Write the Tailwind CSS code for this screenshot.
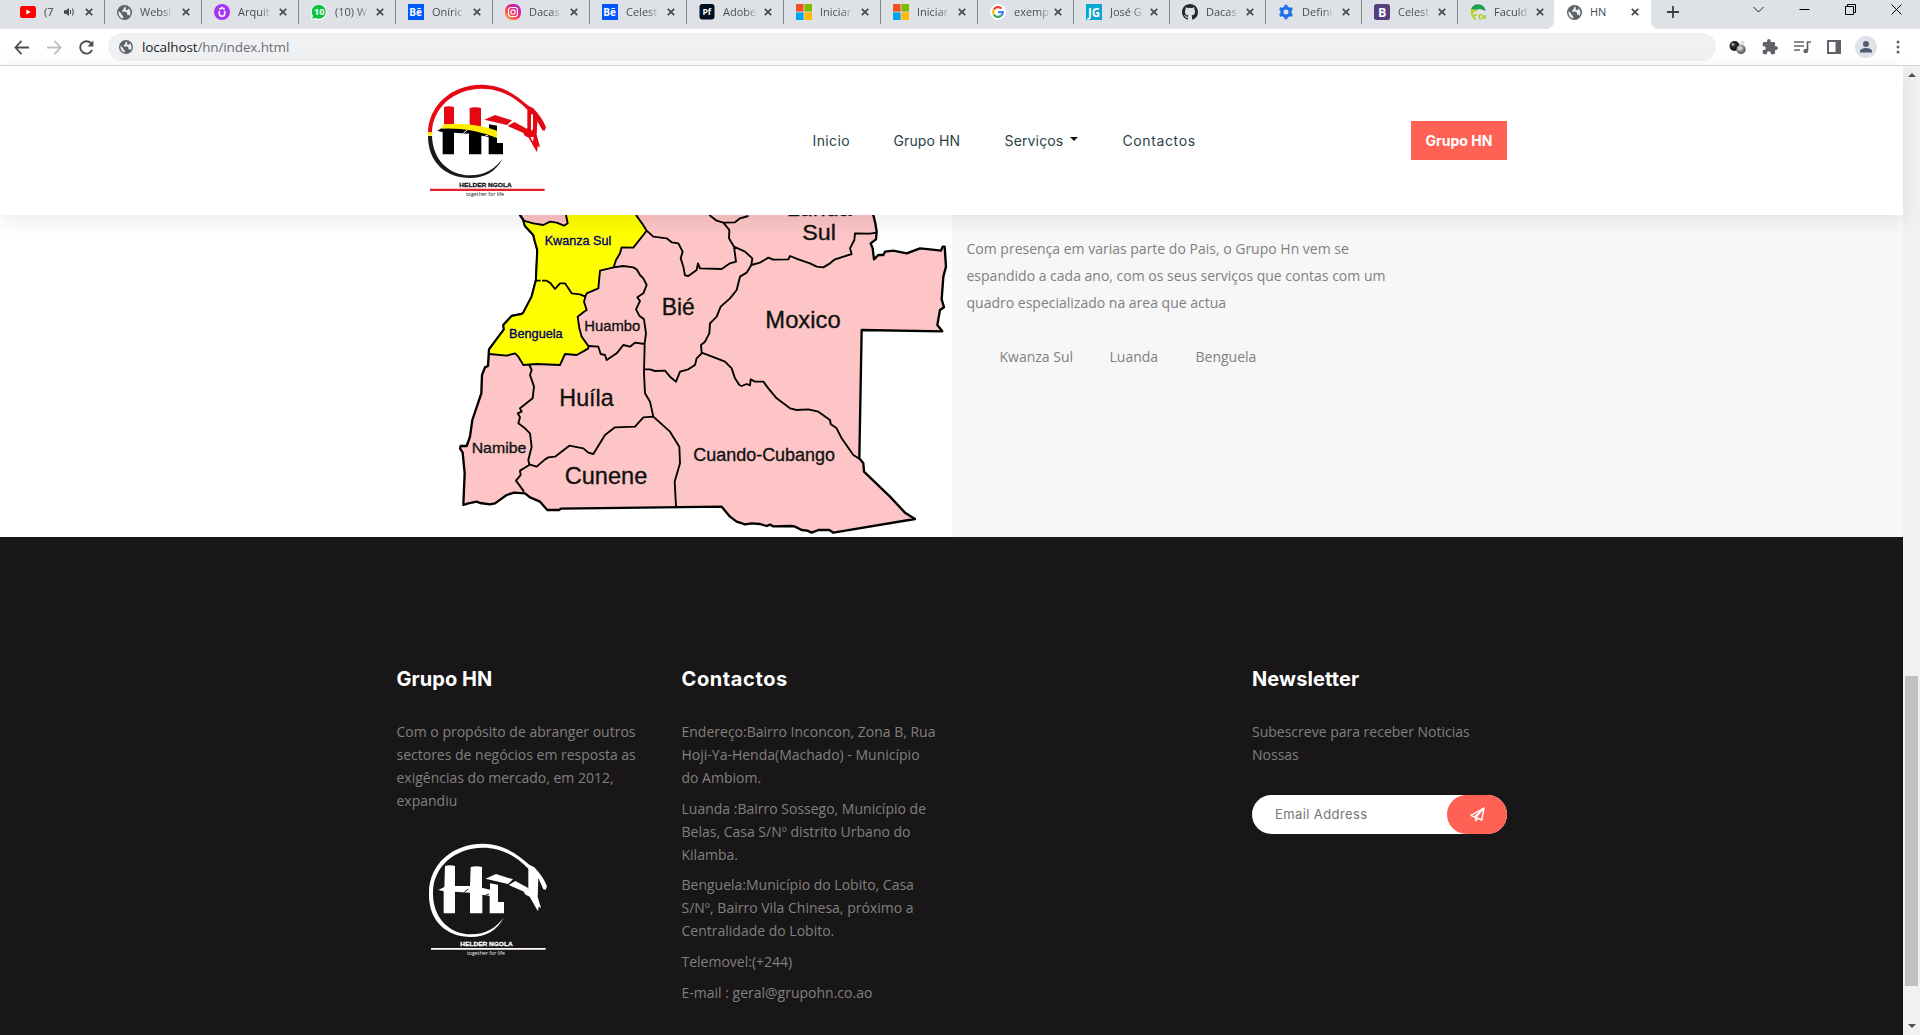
<!DOCTYPE html>
<html lang="pt">
<head>
<meta charset="utf-8">
<title>HN</title>
<script src="https://cdn.jsdelivr.net/npm/@tailwindcss/browser@4"></script>
</head>
<body class="h-[1035px] w-[1920px] overflow-hidden bg-white flex flex-col font-['Open_Sans',sans-serif]">
<svg class="hidden">
  <symbol id="globe" viewBox="0 0 14 14"><circle cx="7" cy="7" r="7" fill="#5f6368"/><path d="M1.500 5.500 4.200 8.200v1l1.600 1.200v2C3 12 1 9.500 1.500 5.500zM8 1.500 6.200 2.800V4L4.800 5.200v1.200h3.600l1 1.200v1.600h1.500l.9 1C13 8 12.800 5 11 3.200L9.800 4.800 8.300 4.400z" fill="#eceef0"/></symbol>
  <symbol id="x" viewBox="0 0 8 8"><path d="M.8.8l6.400 6.400M7.200.8.8 7.200" stroke="#45484c" stroke-width="1.700"/></symbol>
  <symbol id="be" viewBox="0 0 16 16"><path fill="#0057ff" d="M0 0h16v16H0z"/><text x="1.300" y="12" font-family="Open Sans" font-weight="700" font-size="10" fill="#fff">Bē</text></symbol>
  <symbol id="ms" viewBox="0 0 16 16"><path fill="#f25022" d="M0 0h7.600v7.600H0z"/><path fill="#7fba00" d="M8.400 0H16v7.600H8.400z"/><path fill="#00a4ef" d="M0 8.400h7.600V16H0z"/><path fill="#ffb900" d="M8.400 8.400H16V16H8.400z"/></symbol>
</svg>

<!-- tab strip -->
<div class="h-[29px] shrink-0 bg-[#dee1e6] flex pl-2 text-[11px] text-[#45484c]">
  <div class="w-[97px] h-6 flex items-center border-r border-[#85888c] pl-3 pr-[11px]">
    <svg class="w-4 h-4 shrink-0" viewBox="0 0 16 16"><rect y="2" width="16" height="12" rx="2.500" fill="#f00"/><path d="m6.300 5.500 4.400 2.500-4.400 2.500z" fill="#fff"/></svg>
    <span class="ml-2 w-[12px]">(7</span>
    <svg class="ml-2 w-[10px] h-[10px] shrink-0" viewBox="0 0 10 10"><path d="M0 3.300h2L5 1v8L2 6.700H0z" fill="#45484c"/><path d="M6.500 3v4M8.600 1.500q1.200 3.500 0 7" stroke="#45484c" fill="none"/></svg>
    <svg class="ml-auto w-2 h-2 shrink-0"><use href="#x"/></svg>
  </div>
  <div class="w-[97px] h-6 flex items-center border-r border-[#85888c] pl-3 pr-[11px]"><svg class="w-[15px] h-[15px] shrink-0"><use href="#globe"/></svg><span class="ml-2 whitespace-nowrap bg-linear-to-r from-[#45484c] from-70% to-[#c4c7cc] bg-clip-text text-transparent">Websi</span><svg class="ml-auto w-2 h-2 shrink-0"><use href="#x"/></svg></div>
  <div class="w-[97px] h-6 flex items-center border-r border-[#85888c] pl-3 pr-[11px]"><svg class="w-4 h-4 shrink-0" viewBox="0 0 16 16"><circle cx="8" cy="8" r="8" fill="#a435f0"/><path d="M5.300 7v2.500a2.700 2.700 0 0 0 5.400 0V7M5.300 5.500 8 3.700l2.700 1.800" stroke="#fff" stroke-width="1.600" fill="none"/></svg><span class="ml-2 whitespace-nowrap bg-linear-to-r from-[#45484c] from-70% to-[#c4c7cc] bg-clip-text text-transparent">Arquit</span><svg class="ml-auto w-2 h-2 shrink-0"><use href="#x"/></svg></div>
  <div class="w-[97px] h-6 flex items-center border-r border-[#85888c] pl-3 pr-[11px]"><svg class="w-4 h-4 shrink-0" viewBox="0 0 16 16"><path d="M0 16 .8 12A8 8 0 1 1 4 15.200z" fill="#fff"/><path d="M1.300 14.700 2 11.800A7 7 0 1 1 4.500 14z" fill="#0cc143"/><text x="3" y="11.300" font-family="Open Sans" font-weight="700" font-size="9" fill="#fff">10</text></svg><span class="ml-2 whitespace-nowrap bg-linear-to-r from-[#45484c] from-70% to-[#c4c7cc] bg-clip-text text-transparent">(10) W</span><svg class="ml-auto w-2 h-2 shrink-0"><use href="#x"/></svg></div>
  <div class="w-[97px] h-6 flex items-center border-r border-[#85888c] pl-3 pr-[11px]"><svg class="w-4 h-4 shrink-0"><use href="#be"/></svg><span class="ml-2 whitespace-nowrap bg-linear-to-r from-[#45484c] from-70% to-[#c4c7cc] bg-clip-text text-transparent">Oníric</span><svg class="ml-auto w-2 h-2 shrink-0"><use href="#x"/></svg></div>
  <div class="w-[97px] h-6 flex items-center border-r border-[#85888c] pl-3 pr-[11px]"><svg class="w-4 h-4 shrink-0" viewBox="0 0 16 16"><defs><linearGradient id="ig" x1="0" y1="1" x2=".8" y2="0"><stop offset="0" stop-color="#ffc83a"/><stop offset=".5" stop-color="#ff2a5a"/><stop offset="1" stop-color="#b01be0"/></linearGradient></defs><rect width="16" height="16" rx="7" fill="url(#ig)"/><rect x="3.500" y="3.500" width="9" height="9" rx="2.500" stroke="#fff" stroke-width="1.200" fill="none"/><circle cx="8" cy="8" r="2.200" stroke="#fff" stroke-width="1.200" fill="none"/></svg><span class="ml-2 whitespace-nowrap bg-linear-to-r from-[#45484c] from-70% to-[#c4c7cc] bg-clip-text text-transparent">Dacas</span><svg class="ml-auto w-2 h-2 shrink-0"><use href="#x"/></svg></div>
  <div class="w-[97px] h-6 flex items-center border-r border-[#85888c] pl-3 pr-[11px]"><svg class="w-4 h-4 shrink-0"><use href="#be"/></svg><span class="ml-2 whitespace-nowrap bg-linear-to-r from-[#45484c] from-70% to-[#c4c7cc] bg-clip-text text-transparent">Celest</span><svg class="ml-auto w-2 h-2 shrink-0"><use href="#x"/></svg></div>
  <div class="w-[97px] h-6 flex items-center border-r border-[#85888c] pl-3 pr-[11px]"><svg class="w-4 h-4 shrink-0" viewBox="0 0 16 16"><rect x=".5" width="15" height="15.500" rx="3" fill="#001021"/><text x="3.400" y="11" font-family="Open Sans" font-weight="700" font-size="8.500" fill="#fff">Pf</text></svg><span class="ml-2 whitespace-nowrap bg-linear-to-r from-[#45484c] from-70% to-[#c4c7cc] bg-clip-text text-transparent">Adobe</span><svg class="ml-auto w-2 h-2 shrink-0"><use href="#x"/></svg></div>
  <div class="w-[97px] h-6 flex items-center border-r border-[#85888c] pl-3 pr-[11px]"><svg class="w-4 h-4 shrink-0"><use href="#ms"/></svg><span class="ml-2 whitespace-nowrap bg-linear-to-r from-[#45484c] from-70% to-[#c4c7cc] bg-clip-text text-transparent">Iniciar</span><svg class="ml-auto w-2 h-2 shrink-0"><use href="#x"/></svg></div>
  <div class="w-[97px] h-6 flex items-center border-r border-[#85888c] pl-3 pr-[11px]"><svg class="w-4 h-4 shrink-0"><use href="#ms"/></svg><span class="ml-2 whitespace-nowrap bg-linear-to-r from-[#45484c] from-70% to-[#c4c7cc] bg-clip-text text-transparent">Iniciar</span><svg class="ml-auto w-2 h-2 shrink-0"><use href="#x"/></svg></div>
  <div class="w-[96px] h-6 flex items-center border-r border-[#85888c] pl-3 pr-[11px]"><svg class="w-4 h-4 shrink-0" viewBox="0 0 16 16"><circle cx="8" cy="8" r="8" fill="#fff"/><g fill="none" stroke-width="2.200"><path d="M11.500 4.500A4.900 4.900 0 0 0 3.800 5.500" stroke="#ea4335"/><path d="M3.800 5.500a4.900 4.900 0 0 0 0 5" stroke="#fbbc05"/><path d="M3.800 10.500a4.900 4.900 0 0 0 7.400 1.200" stroke="#34a853"/><path d="M11.200 11.700a4.900 4.900 0 0 0 1.700-3.500H8" stroke="#4285f4"/></g></svg><span class="ml-2 whitespace-nowrap bg-linear-to-r from-[#45484c] from-70% to-[#c4c7cc] bg-clip-text text-transparent">exemp</span><svg class="ml-auto w-2 h-2 shrink-0"><use href="#x"/></svg></div>
  <div class="w-[96px] h-6 flex items-center border-r border-[#85888c] pl-3 pr-[11px]"><svg class="w-4 h-4 shrink-0" viewBox="0 0 16 16"><path fill="#08a6d0" d="M0 0h16v16H0z"/><text x="2" y="13" textLength="12" lengthAdjust="spacingAndGlyphs" font-family="Open Sans" font-weight="700" font-size="13" fill="#fff">JG</text></svg><span class="ml-2 whitespace-nowrap bg-linear-to-r from-[#45484c] from-70% to-[#c4c7cc] bg-clip-text text-transparent">José G</span><svg class="ml-auto w-2 h-2 shrink-0"><use href="#x"/></svg></div>
  <div class="w-[96px] h-6 flex items-center border-r border-[#85888c] pl-3 pr-[11px]"><svg class="w-4 h-4 shrink-0" viewBox="0 0 16 16"><path fill="#24292e" d="M8 0C3.580 0 0 3.580 0 8c0 3.540 2.290 6.530 5.470 7.590.4.070.55-.17.55-.38 0-.19-.01-.82-.01-1.490-2.010.37-2.530-.49-2.690-.94-.09-.23-.48-.94-.82-1.130-.28-.15-.68-.52-.01-.53.63-.01 1.080.58 1.230.82.72 1.210 1.870.87 2.330.66.07-.52.28-.87.51-1.070-1.780-.2-3.640-.89-3.640-3.950 0-.87.31-1.590.82-2.150-.08-.2-.36-1.020.08-2.120 0 0 .67-.21 2.200.82a7.600 7.600 0 0 1 4 0c1.530-1.040 2.200-.82 2.200-.82.44 1.100.16 1.920.08 2.120.51.56.82 1.270.82 2.150 0 3.070-1.870 3.750-3.650 3.950.29.25.54.73.54 1.480 0 1.070-.01 1.930-.01 2.200 0 .21.15.46.55.38A8 8 0 0 0 16 8c0-4.420-3.580-8-8-8z"/></svg><span class="ml-2 whitespace-nowrap bg-linear-to-r from-[#45484c] from-70% to-[#c4c7cc] bg-clip-text text-transparent">Dacas</span><svg class="ml-auto w-2 h-2 shrink-0"><use href="#x"/></svg></div>
  <div class="w-[96px] h-6 flex items-center border-r border-[#85888c] pl-3 pr-[11px]"><svg class="w-4 h-4 shrink-0" viewBox="0 0 16 16"><circle cx="8" cy="8" r="4.100" fill="none" stroke="#1a73e8" stroke-width="3.200"/><path d="M8 .8v2.800M8 12.400v2.800M1.800 4.400l2.400 1.400M11.800 10.200l2.400 1.400M1.800 11.600l2.400-1.400M11.800 5.800l2.400-1.400" stroke="#1a73e8" stroke-width="3"/></svg><span class="ml-2 whitespace-nowrap bg-linear-to-r from-[#45484c] from-70% to-[#c4c7cc] bg-clip-text text-transparent">Defini</span><svg class="ml-auto w-2 h-2 shrink-0"><use href="#x"/></svg></div>
  <div class="w-[96px] h-6 flex items-center border-r border-[#85888c] pl-3 pr-[11px]"><svg class="w-4 h-4 shrink-0" viewBox="0 0 16 16"><rect width="16" height="16" rx="2.500" fill="#563d7c"/><text x="4" y="12.500" font-family="Open Sans" font-weight="700" font-size="12.500" fill="#fff">B</text></svg><span class="ml-2 whitespace-nowrap bg-linear-to-r from-[#45484c] from-70% to-[#c4c7cc] bg-clip-text text-transparent">Celest</span><svg class="ml-auto w-2 h-2 shrink-0"><use href="#x"/></svg></div>
  <div class="w-[96px] h-[29px] bg-white">
    <div class="h-[29px] rounded-br-lg bg-[#dee1e6] pb-[5px] flex items-center pl-3 pr-[10px]"><svg class="w-4 h-4 shrink-0" viewBox="0 0 16 16"><path d="M1 5C3-1 11-1 14 3l2 4-6-2-5 1-4 2z" fill="#1d9f50"/><path d="M1 5C0 9 1 12 3 15l0-6 5-3z" fill="#b7d631"/><path d="M7 11q-3-1-3 1.500t2 3M12 11q-3-1-3 1.500t2 3M13 15v-3h2v3" stroke="#a8cf20" stroke-width="1.500" fill="none"/></svg><span class="ml-2 whitespace-nowrap bg-linear-to-r from-[#45484c] from-70% to-[#c4c7cc] bg-clip-text text-transparent">Faculd</span><svg class="ml-auto w-2 h-2 shrink-0"><use href="#x"/></svg></div>
  </div>
  <div class="w-[97px] h-[29px] pb-[5px] flex items-center pl-[13px] pr-3 bg-white"><svg class="w-[15px] h-[15px] shrink-0"><use href="#globe"/></svg><span class="ml-2">HN</span><svg class="ml-auto w-2 h-2"><use href="#x"/></svg></div>
  <div class="flex-1 bg-white">
  <div class="h-[29px] rounded-bl-lg bg-[#dee1e6] flex">
  <svg class="ml-4 mt-[6px] w-3 h-3" viewBox="0 0 12 12"><path d="M6 0v12M0 6h12" stroke="#3c4043" stroke-width="1.800"/></svg>
  <div class="flex ml-[74px] mt-1 gap-[35px] items-center h-[11px]">
    <svg class="w-[11px] h-[11px]" viewBox="0 0 11 11"><path d="m.5 3 5 5 5-5" stroke="#222" fill="none"/></svg>
    <svg class="w-[11px] h-[11px]" viewBox="0 0 11 11"><path d="M.5 5.500h10" stroke="#000"/></svg>
    <svg class="w-[11px] h-[11px]" viewBox="0 0 11 11"><path d="M.5 2.500h8v8h-8zM2.500 2V.5h8v8H9" stroke="#000" fill="none"/></svg>
    <svg class="w-[11px] h-[11px]" viewBox="0 0 11 11"><path d="m.5.500 10 10m0-10-10 10" stroke="#000" fill="none"/></svg>
  </div>
  </div>
  </div>
</div>

<!-- toolbar -->
<div class="h-[37px] shrink-0 flex items-center border-b border-[#d5d7da] pl-[14px]">
  <svg class="w-[15px] h-[15px]" viewBox="0 0 16 16"><path d="M8 1 1.500 8 8 15M1.500 8H16" stroke="#4b4f54" stroke-width="1.900" fill="none"/></svg>
  <svg class="ml-[18px] w-[15px] h-[15px]" viewBox="0 0 16 16"><path d="m8 1 6.500 7L8 15M14.500 8H0" stroke="#bcbec1" stroke-width="1.900" fill="none"/></svg>
  <svg class="ml-[17px] w-[15px] h-[15px]" viewBox="0 0 16 16"><path d="M14 10.500A6.600 6.600 0 1 1 12.800 3.400L14 5" stroke="#4b4f54" stroke-width="2" fill="none"/><path d="M15.300.5V7H9z" fill="#4b4f54"/></svg>
  <div class="ml-[14px] w-[1608px] h-7 rounded-full bg-[#f0f1f3] flex items-center pl-[11px] text-[13.500px] tracking-[-0.130px] text-[#202124]">
    <svg class="w-[14px] h-[14px]"><use href="#globe"/></svg>
    <span class="ml-[9px]">localhost<span class="text-[#6a6e73]">/hn/index.html</span></span>
  </div>
  <svg class="ml-[13px] w-[18px] h-4" viewBox="0 0 18 16"><defs><radialGradient id="b1" cx=".35" cy=".35"><stop offset="0" stop-color="#ddd"/><stop offset=".4" stop-color="#333"/><stop offset="1" stop-color="#111"/></radialGradient><radialGradient id="b2" cx=".4" cy=".35"><stop offset="0" stop-color="#eee"/><stop offset="1" stop-color="#666"/></radialGradient></defs><circle cx="13" cy="4" r="2.500" fill="#e3e3e3"/><circle cx="5.500" cy="7" r="5" fill="url(#b1)"/><circle cx="12" cy="10.500" r="4.700" fill="url(#b2)"/></svg>
  <svg class="ml-[15px] w-[16px] h-[16px]" viewBox="1 1 22 22"><path fill="#5f6368" d="M20.500 11H19V7c0-1.100-.9-2-2-2h-4V3.500a2.500 2.500 0 0 0-5 0V5H4c-1.100 0-1.990.9-1.990 2v3.800H3.500a2.700 2.700 0 0 1 0 5.400H2V20c0 1.100.9 2 2 2h3.800v-1.500a2.700 2.700 0 0 1 5.400 0V22H17c1.100 0 2-.9 2-2v-4h1.500a2.500 2.500 0 0 0 0-5z"/></svg>
  <svg class="ml-[16px] w-[17px] h-[14px]" viewBox="0 0 17 14"><path d="M0 2h10M0 6h10M0 10h6" stroke="#5f6368" stroke-width="1.700"/><path d="M13.500 11V2H17" stroke="#5f6368" stroke-width="1.700" fill="none"/><circle cx="11.700" cy="11" r="2.300" fill="#5f6368"/></svg>
  <svg class="ml-[16px] w-[14px] h-[14px]" viewBox="0 0 14 14"><path d="M1 1h12v12H1z" stroke="#5f6368" stroke-width="2" fill="none"/><path d="M8.500 1H13v12H8.500z" fill="#5f6368"/></svg>
  <svg class="ml-[14px] w-[22px] h-[22px]" viewBox="0 0 22 22"><circle cx="11" cy="11" r="11" fill="#dfe2e8"/><circle cx="11" cy="8" r="3" fill="#4f5e75"/><path d="M5 16.500v-1.500c0-2 3.500-3 6-3s6 1 6 3v1.500z" fill="#4f5e75"/></svg>
  <svg class="ml-[19px] w-1 h-[14px]" viewBox="0 0 4 14"><g fill="#5f6368"><circle cx="2" cy="2" r="1.500"/><circle cx="2" cy="7" r="1.500"/><circle cx="2" cy="12" r="1.500"/></g></svg>
</div>

<div class="flex h-[969px]">
<div class="w-[1903px] flex flex-col">
  <header class="relative z-10 h-[149px] shrink-0 bg-white flex items-center pl-[428px] shadow-[0_5px_22px_rgba(0,0,0,0.09)] font-[Inter,sans-serif] text-[14px] text-[#2b4248]">
    <svg class="w-[118px] h-[115px] mt-[-1px]" viewBox="84 50 354 345">
      <path fill="#e50713" d="M84 198C86 120 150 56 245 55 310 56 350 88 385 118L400 126C415 142 430 162 438 183L434 193 427 192 412 165 410 205 420 242 413 240 411 258 403 244 386 214 374 208 368 196 382 186V130C345 92 300 67 245 67 160 68 98 125 96 198z"/>
      <g fill="#e50713"><path d="M132 122q15-4 30 0v52h-30zM209 125q17-5 34 0v56l-34-4zM253 160l32-14 51 16-15 14zM323 179l20-12 40 22-12 11z"/></g>
      <path d="M393 145l6-2v45l-6 6zM391 212l8 14 2-14z" fill="#fff"/>
      <path d="M84 198h12v10H84z" fill="#ffec00"/>
      <path d="M84 209h12c2 70 50 118 114 118 45 0 75-20 98-50-20 38-54 58-98 58C140 335 84 290 84 209z" fill="#1a1a18"/>
      <path d="M112 193l20-12 75 0 60 18V174l24 4v52h18v34h-43v-52l-22-4v56h-37v-62l-45-3v65h-34v-66z" fill="#000"/>
      <path d="M128 175q80-10 163 18v22q-80-32-166-28z" fill="#ffec00"/>
      <path d="m190 200 12-9M254 210l10-4" stroke="#fff" stroke-width="3"/>
      <text x="178" y="361" textLength="157" lengthAdjust="spacingAndGlyphs" font-family="Liberation Sans" font-weight="700" font-size="18" fill="#111" stroke="#111" stroke-width=".8">HELDER NGOLA</text>
      <path d="M90 367h344v7H90z" fill="#e5202a"/>
      <text x="198" y="388" textLength="114" lengthAdjust="spacingAndGlyphs" font-family="Open Sans" font-size="16" fill="#111">together for life</text>
    </svg>
    <nav class="flex ml-[266.500px] mt-[-1px]">
      <span class="w-[81px] tracking-[0.400px]">Inicio</span>
      <span class="w-[111px] tracking-[0.100px]">Grupo HN</span>
      <span class="w-[118px] flex items-center tracking-[0.150px]">Serviços<i class="ml-[7px] mt-[-2px] w-0 h-0 border-x-[4.500px] border-x-transparent border-t-[4.500px] border-t-[#111]"></i></span>
      <span class="w-[288.500px] tracking-[0.620px]">Contactos</span>
    </nav>
    <span class="w-[96px] h-[39px] bg-[#ff6154] text-white font-bold tracking-[0px] flex items-center justify-center">Grupo HN</span>
  </header>

  <section class="h-[322px] shrink-0 flex">
    <svg class="ml-[440px] w-[512px] h-[322px]" viewBox="0 45 1536 966">
      <path fill="#fdc5c6" stroke="#000" stroke-width="7" stroke-linejoin="round" d="M240 30L240 45 250 60 255 78 280 105 285 125 292 150 288 240 275 290 250 338 245 342 215 348 190 375 192 388 147 448 144 498 135 502 126 525 124 580 97 660 90 710 80 738 62 738 60 745 68 758 74 820 70 915 85 910 110 905 120 909 150 913 165 910 200 885 222 878 255 880 270 892 300 905 322 930 358 930 362 926 845 920 870 950 890 965 915 973 935 970 960 972 980 978 990 974 1000 979 1055 978 1065 980 1085 990 1102 992 1115 998 1135 990 1168 990 1180 998 1425 957 1395 938 1350 890 1272 815 1270 790 1258 775 1265 390 1507 394 1492 375 1500 330 1512 322 1505 298 1510 230 1518 200 1514 140 1508 140 1503 152 1470 148 1440 145 1400 160 1360 152 1335 155 1330 165 1315 165 1302 178 1298 145 1292 130 1308 118 1310 95 1306 70 1300 45V30z"/>
      <path fill="#ff0" d="M250 62 280 70 310 75 330 65 350 68 372 77 383 70 378 30H580L620 92 610 105 580 143 545 142 540 160 528 180 521 202 480 212 475 265 440 280 436 290 432 305 440 330 432 335 413 350 418 385 425 410 445 438 445 445 410 465 375 462 360 495 290 495 250 493 235 470 225 460 200 467 147 462 150 450 192 388 190 375 215 348 245 342 250 338 275 290 288 240 292 150 285 125 280 105 255 78z"/>
      <g fill="none" stroke="#000" stroke-width="5.600" stroke-linejoin="round">
        <path d="M250 62 255 78 280 105 285 125 292 150 288 240 275 290 250 338 245 342 215 348 190 375 192 388 147 448V462"/>
        <path d="M250 62 280 70 310 75 330 65 350 68 372 77 383 70 378 45M588 45 606 70 620 92 610 105 580 143 545 142 540 160 528 180 521 202 480 212 475 265 440 280 436 290 420 283 395 280 375 250 360 250 345 267 332 250 320 242 306 242M288 242h14M436 290 432 305 440 330 432 335 413 350 418 385 425 410 445 438 445 445 430 454 410 465 375 462 360 495 290 492 250 495 235 470 225 460 200 467 147 462"/>
        <path d="M521 202 550 198 580 202 590 208 600 225 610 235 620 255 610 280 592 292 600 303 588 328 598 347 612 358 618 400 614 430 612 520 615 580 630 605 640 650M445 438 475 440 482 462 495 465 500 480 530 460 550 435 570 440 585 428 614 432"/>
        <path d="M620 92 640 110 680 115 695 127 715 130 728 155 722 175 730 200 735 226 745 228 770 210 774 190 780 205 845 207 870 190 888 185 882 140 867 115 868 90 850 68M808 45 830 62 850 68 885 67 900 55 925 48M882 140 915 155 937 175 934 195 960 188 985 173 1000 179 1045 178 1050 168 1075 178 1110 190 1130 200 1150 202 1170 190 1185 178 1235 162 1230 145 1243 120 1245 100 1290 101 1310 98"/>
        <path d="M934 195 920 218 900 230 890 270 870 295 842 320 830 350 810 370 808 400 795 425 783 435 785 458 830 475 855 485 875 505 885 535 898 555 905 558 920 552 930 556 932 538 945 545 970 545 985 565 1010 595 1050 625 1070 630 1105 628 1135 635 1170 660 1172 672 1190 685 1205 715 1240 765 1260 778M785 460 770 475 765 495 745 508 720 515 708 545 690 530 675 512 645 513 630 508 612 508"/>
        <path d="M640 650 610 652 585 680 525 682 495 705 460 762 445 758 430 745 388 737 345 770 325 772 315 778 290 800 268 793M268 495 275 510 270 525 282 560 278 595 240 625 245 635 233 640 240 652 235 670 255 685 270 700 275 740 265 780 268 795 240 812 242 825 228 842 252 875M640 650 690 695 718 740 720 790 704 845 708 918"/>
      </g>
      <g font-family="Liberation Sans, Arial, sans-serif" fill="#111">
        <g fill="#00006a" stroke="#00006a" stroke-width="1"><text x="314" y="136" font-size="38" textLength="200" lengthAdjust="spacingAndGlyphs">Kwanza Sul</text><text x="207" y="413" font-size="37" textLength="161" lengthAdjust="spacingAndGlyphs">Benguela</text></g>
        <g stroke="#111" stroke-width="1">
        <text x="433" y="393" font-size="45" textLength="168" lengthAdjust="spacingAndGlyphs">Huambo</text>
        <text x="665" y="345" font-size="71" textLength="99" lengthAdjust="spacingAndGlyphs">Bié</text>
        <text x="358" y="618" font-size="71" textLength="163" lengthAdjust="spacingAndGlyphs">Huíla</text>
        <text x="95" y="759" font-size="45" textLength="164" lengthAdjust="spacingAndGlyphs">Namibe</text>
        <text x="374" y="851" font-size="71" textLength="248" lengthAdjust="spacingAndGlyphs">Cunene</text>
        <text x="760" y="784" font-size="55" textLength="425" lengthAdjust="spacingAndGlyphs">Cuando-Cubango</text>
        <text x="976" y="384" font-size="71" textLength="226" lengthAdjust="spacingAndGlyphs">Moxico</text>
        <text x="1087" y="120" font-size="68" textLength="101" lengthAdjust="spacingAndGlyphs">Sul</text>
        <text x="1040" y="47" font-size="68" textLength="195" lengthAdjust="spacingAndGlyphs">Lunda</text>
        </g>
      </g>
    </svg>
    <div class="flex-1 bg-[#f7f7f7] pl-[14.500px] pt-[20px] text-[14px] leading-[27px] text-[#808080] whitespace-nowrap">
      <p>Com presença em varias parte do Pais, o Grupo Hn vem se<br>espandido a cada ano, com os seus serviços que contas com um<br>quadro especializado na area que actua</p>
      <ul class="flex mt-[27px] pl-[33px]"><li class="w-[110px]">Kwanza Sul</li><li class="w-[86px]">Luanda</li><li>Benguela</li></ul>
    </div>
  </section>

  <footer class="flex-1 bg-[#181616] pl-[396.500px] pt-[127px] flex text-[14px] leading-[22.900px] text-[#808080] whitespace-nowrap">
    <div class="w-[285px]">
      <h2 class="font-[Inter,sans-serif] font-bold text-[20px] leading-[30px] text-white mb-[27px] tracking-[0.050px]">Grupo HN</h2>
      <p>Com o propósito de abranger outros<br>sectores de negócios em resposta as<br>exigências do mercado, em 2012,<br>expandiu</p>
      <svg class="ml-8 mt-[29px] w-[118px] h-[115px]" viewBox="84 50 354 345">
        <g fill="#fff"><path d="M84 209V198C86 120 150 56 245 55 310 56 350 88 385 118L400 126C415 142 430 162 438 183L434 193 427 192 412 158 410 215 420 248 413 244 411 258 403 244 386 214 374 208 368 200 382 190V130C345 92 300 67 245 67 160 68 98 125 96 198v11c2 70 50 118 114 118 45 0 75-20 98-50-20 38-54 58-98 58C140 335 84 290 84 209z"/><path d="M132 122q15-4 30 0v60h45l2-57q17-5 34 0v62l24 6v-19l24 4v52h18v34h-43v-52l-22-4v56h-37v-62l-45-3v65h-34v-66l-16-4 18-9zM253 160l32-14 51 16-15 14zM323 179l20-12 40 22-12 11z"/></g>
        <path d="m190 200 12-9M254 210l10-4" stroke="#181616" stroke-width="3"/>
        <text x="178" y="361" textLength="157" lengthAdjust="spacingAndGlyphs" font-family="Liberation Sans" font-weight="700" font-size="18" fill="#fff" stroke="#fff" stroke-width=".8">HELDER NGOLA</text>
        <path d="M90 368h344v5H90z" fill="#fff"/>
        <text x="198" y="388" textLength="114" lengthAdjust="spacingAndGlyphs" font-family="Open Sans" font-size="16" fill="#eee">together for life</text>
      </svg>
    </div>
    <div class="w-[570.500px]">
      <h2 class="font-[Inter,sans-serif] font-bold text-[20px] leading-[30px] text-white mb-[27px] tracking-[0.600px]">Contactos</h2>
      <p class="mb-2">Endereço:Bairro Inconcon, Zona B, Rua<br>Hoji-Ya-Henda(Machado) - Município<br>do Ambiom.</p>
      <p class="mb-2">Luanda :Bairro Sossego, Município de<br>Belas, Casa S/Nº distrito Urbano do<br>Kilamba.</p>
      <p class="mb-2">Benguela:Município do Lobito, Casa<br>S/Nº, Bairro Vila Chinesa, próximo a<br>Centralidade do Lobito.</p>
      <p class="mb-2">Telemovel:(+244)</p>
      <p>E-mail : geral@grupohn.co.ao</p>
    </div>
    <div class="w-[255px]">
      <h2 class="font-[Inter,sans-serif] font-bold text-[20px] leading-[30px] text-white mb-[27px] tracking-[0.100px]">Newsletter</h2>
      <p>Subescreve para receber Noticias<br>Nossas</p>
      <div class="mt-[28px] h-[39px] rounded-full bg-white flex items-center justify-between pl-[23px] font-[Inter,sans-serif] text-[13px] tracking-[0.400px] text-[#757575]">
        <span>Email Address</span>
        <span class="w-[60px] h-[39px] rounded-full bg-[#ff6154] flex items-center justify-center"><svg class="w-[15px] h-[15px]" viewBox="0 0 15 15"><path d="M14 1 1 8.300l3.500 1.800L14 1 5.600 10.600v3.200l2-2.300M14 1l-2.300 12-6-2.600" stroke="#fff" stroke-width="1.400" fill="none" stroke-linejoin="round"/></svg></span>
      </div>
    </div>
  </footer>
</div>
<!-- scrollbar -->
<div class="w-[17px] bg-[#f1f1f1] flex flex-col items-center pt-[7px] pb-[7px]">
  <i class="w-0 h-0 border-x-[4px] border-x-transparent border-b-[4px] border-b-[#505050]"></i>
  <div class="mt-[599px] h-[310px] w-[13px] bg-[#c1c1c1]"></div>
  <i class="mt-auto w-0 h-0 border-x-[4px] border-x-transparent border-t-[4px] border-t-[#505050]"></i>
</div>
</div>
</body>
</html>
